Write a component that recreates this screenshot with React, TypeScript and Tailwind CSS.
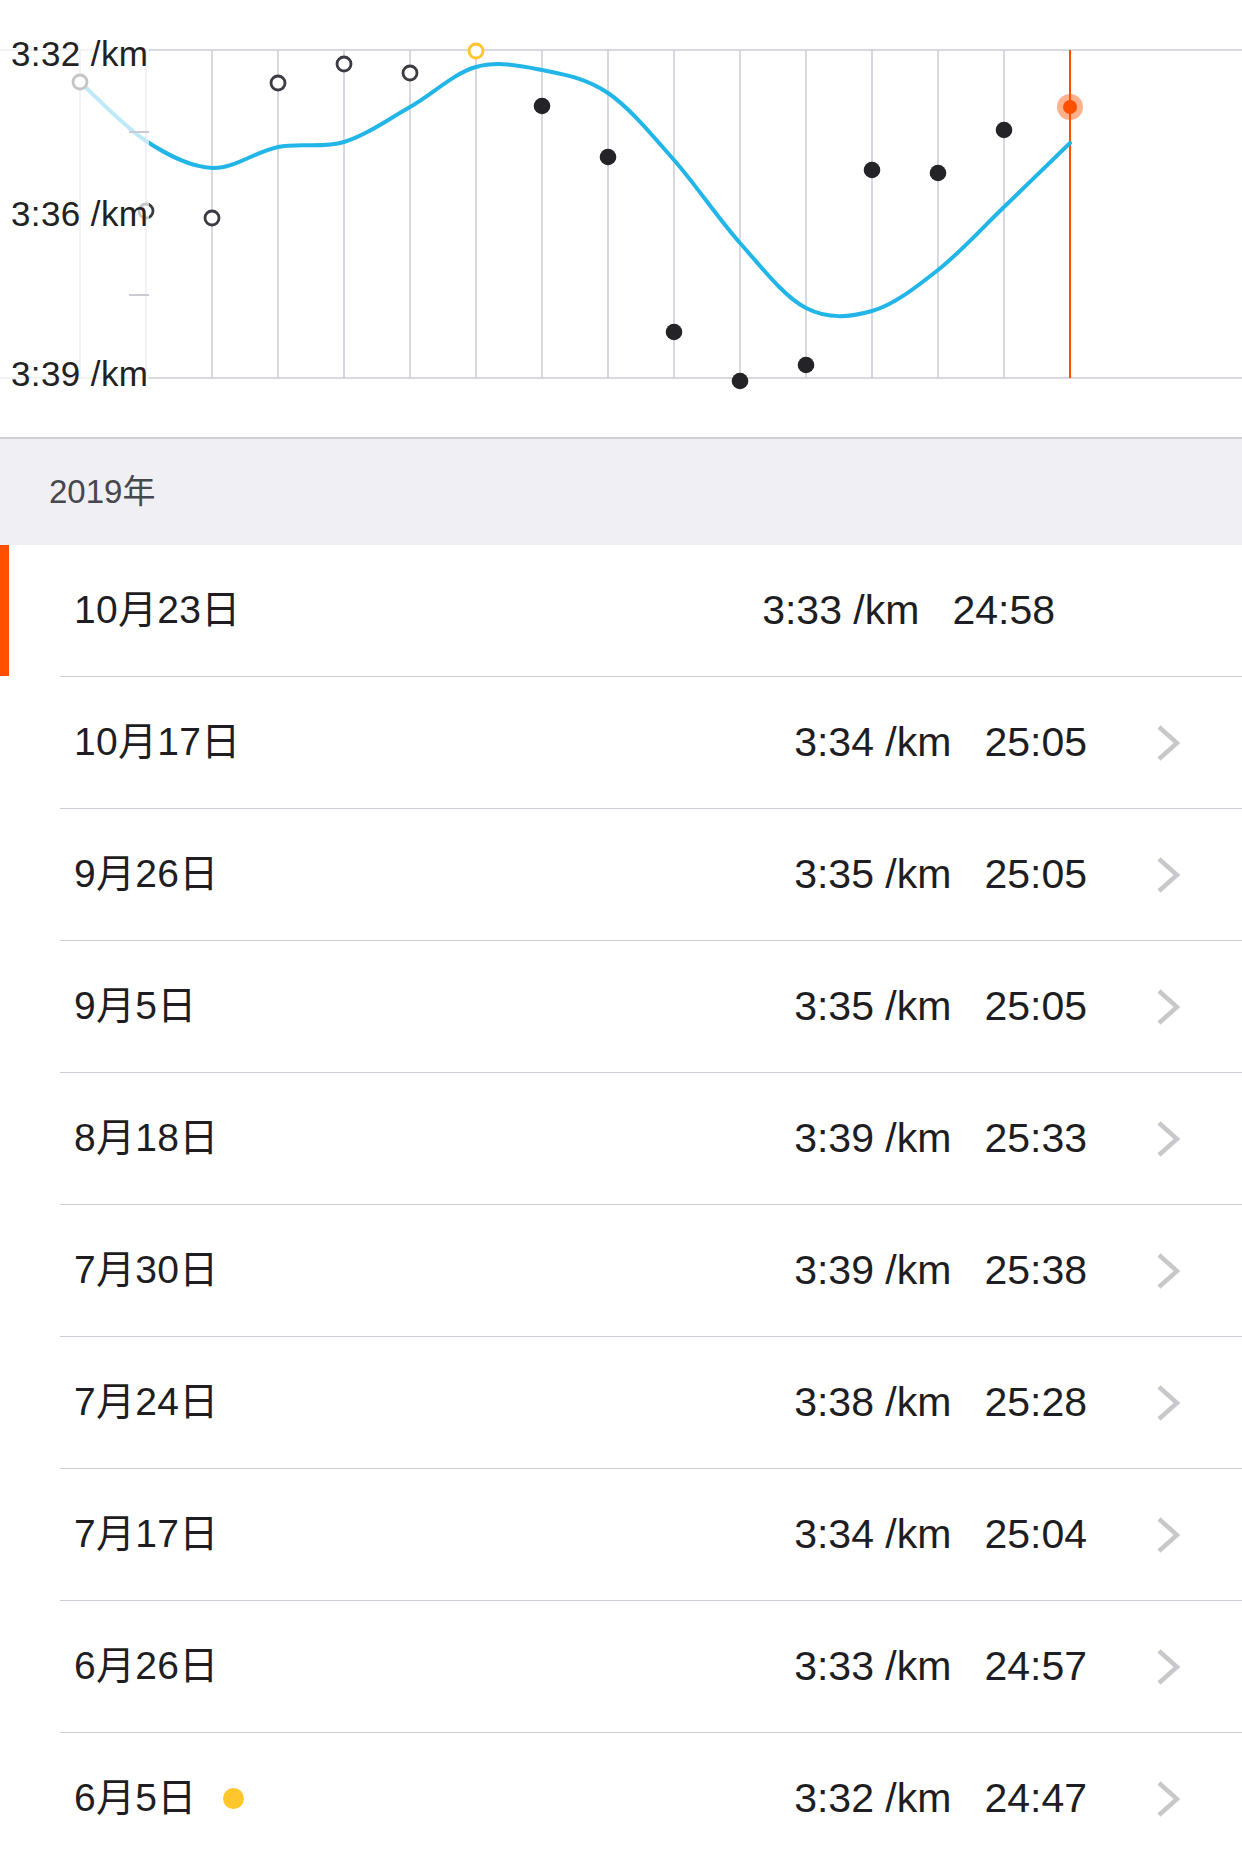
import React from 'react'

const FONT = '"Liberation Sans", "Noto Sans CJK SC", sans-serif'

type Pt = [number, number]

// trend line samples, one per grid column
const CURVE: Pt[] = [
  [80, 82], [146, 141], [212, 168], [278, 147], [344, 142], [410, 107],
  [476, 67], [542, 70], [608, 93], [674, 160], [740, 243], [806, 308],
  [872, 311], [938, 270], [1004, 207], [1070, 143],
]

const HOLLOW: Pt[] = [[80, 82], [146, 211], [212, 218], [278, 83], [344, 64], [410, 73]]
const FILLED: Pt[] = [[542, 106], [608, 157], [674, 332], [740, 381], [806, 365], [872, 170], [938, 173], [1004, 130]]

const GRID_X = Array.from({ length: 16 }, (_, i) => 80 + i * 66)

interface Run {
  date: string
  pace: string
  time: string
  selected?: boolean
  dot?: boolean
}

const RUNS: Run[] = [
  { date: '10月23日', pace: '3:33 /km', time: '24:58', selected: true },
  { date: '10月17日', pace: '3:34 /km', time: '25:05' },
  { date: '9月26日', pace: '3:35 /km', time: '25:05' },
  { date: '9月5日', pace: '3:35 /km', time: '25:05' },
  { date: '8月18日', pace: '3:39 /km', time: '25:33' },
  { date: '7月30日', pace: '3:39 /km', time: '25:38' },
  { date: '7月24日', pace: '3:38 /km', time: '25:28' },
  { date: '7月17日', pace: '3:34 /km', time: '25:04' },
  { date: '6月26日', pace: '3:33 /km', time: '24:57' },
  { date: '6月5日', pace: '3:32 /km', time: '24:47', dot: true },
]

function splinePath(p: Pt[]) {
  let d = `M${p[0][0]},${p[0][1]}`
  for (let i = 0; i < p.length - 1; i++) {
    const p0 = p[i - 1] ?? p[i]
    const p1 = p[i]
    const p2 = p[i + 1]
    const p3 = p[i + 2] ?? p2
    const c1x = p1[0] + (p2[0] - p0[0]) / 6
    const c1y = p1[1] + (p2[1] - p0[1]) / 6
    const c2x = p2[0] - (p3[0] - p1[0]) / 6
    const c2y = p2[1] - (p3[1] - p1[1]) / 6
    d += ` C${c1x},${c1y} ${c2x},${c2y} ${p2[0]},${p2[1]}`
  }
  return d
}

function Chart() {
  return (
    <div className="relative h-[439px] border-b-2 border-[#cfced6]">
      <svg width="1242" height="437" viewBox="0 0 1242 437" className="block">
        <line x1="0" y1="50" x2="1242" y2="50" stroke="#cbcbd6" strokeWidth="1.6" />
        <line x1="0" y1="378" x2="1242" y2="378" stroke="#cbcbd6" strokeWidth="1.6" />
        {GRID_X.slice(0, -1).map((x) => (
          <line key={x} x1={x} y1="50" x2={x} y2="378" stroke="#cbcbd6" strokeWidth="1.5" />
        ))}
        <line x1="1070" y1="50" x2="1070" y2="378" stroke="#ff5000" strokeWidth="2" />
        <path d={splinePath(CURVE)} fill="none" stroke="#22b5e8" strokeWidth="4" strokeLinecap="round" />
        {HOLLOW.map(([x, y]) => (
          <circle key={x} cx={x} cy={y} r="7" fill="#fff" stroke="#3b3b44" strokeWidth="2.8" />
        ))}
        <circle cx="476" cy="51" r="7" fill="#fff" stroke="#ffc42e" strokeWidth="2.8" />
        {FILLED.map(([x, y]) => (
          <circle key={x} cx={x} cy={y} r="8.3" fill="#232328" />
        ))}
        <circle cx="1070" cy="107" r="13" fill="#ff5000" fillOpacity="0.45" />
        <circle cx="1070" cy="107" r="7" fill="#ff5000" />
      </svg>

      {/* y axis panel, washes out whatever sits under it */}
      <div className="absolute left-0 top-0 h-[437px] w-[149px] bg-white/70">
        <span className="absolute left-[11px] top-[36px] text-[35px] leading-none tracking-[0.4px] text-[#222]">3:32 /km</span>
        <span className="absolute left-[11px] top-[196px] text-[35px] leading-none tracking-[0.4px] text-[#222]">3:36 /km</span>
        <span className="absolute left-[11px] top-[356px] text-[35px] leading-none tracking-[0.4px] text-[#222]">3:39 /km</span>
        <div className="absolute right-0 top-[131px] h-[2px] w-[20px] bg-[#cbcbd6]" />
        <div className="absolute right-0 top-[294px] h-[2px] w-[20px] bg-[#cbcbd6]" />
      </div>
    </div>
  )
}

function Chevron() {
  return (
    <svg width="24" height="38" viewBox="0 0 24 38">
      <polyline points="3,3 21,19 3,35" fill="none" stroke="#c7c7cc" strokeWidth="4.5" />
    </svg>
  )
}

function RunRow({ run }: { run: Run }) {
  return (
    <div className="flex">
      <div className="w-[60px] shrink-0">
        {run.selected && <div className="h-[131px] w-[9px] bg-[#ff5000]" />}
      </div>
      <div className="flex h-[132px] flex-1 items-center border-b border-[#cfced6] pl-[14px]">
        <span className="text-[39px] tracking-[0.3px] text-[#1e1e22]">{run.date}</span>
        {run.dot && <span className="ml-[26px] h-[21px] w-[21px] rounded-full bg-[#ffc72c]" />}
        <div className={`ml-auto flex items-center gap-[33px] text-[41px] text-[#1e1e22] ${run.selected ? 'mr-[187px]' : ''}`}>
          <span>{run.pace}</span>
          <span>{run.time}</span>
        </div>
        {!run.selected && (
          <div className="ml-[69px] mr-[62px] flex items-center">
            <Chevron />
          </div>
        )}
      </div>
    </div>
  )
}

export default function App() {
  return (
    <div className="h-[1853px] w-[1242px] overflow-hidden bg-white" style={{ fontFamily: FONT }}>
      <Chart />
      <div className="flex h-[106px] items-center bg-[#efeff4] pl-[49px]">
        <span className="text-[33px] text-[#47474f]">2019年</span>
      </div>
      {RUNS.map((r) => (
        <RunRow key={r.date} run={r} />
      ))}
    </div>
  )
}
